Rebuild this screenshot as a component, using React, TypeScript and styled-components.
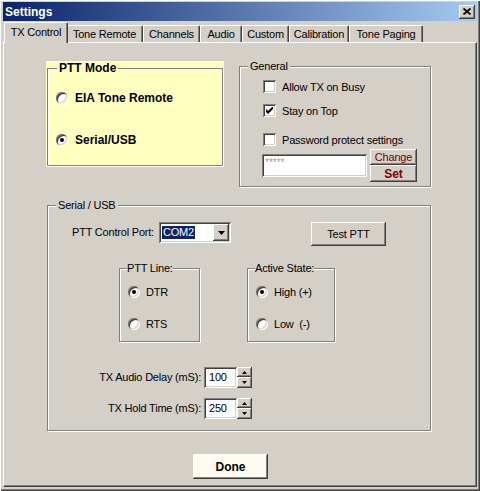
import React from "react";
import styled, { createGlobalStyle } from "styled-components";

const FACE = "#D4D0C8";
const YELLOW = "#FFFFC0";

const GlobalStyle = createGlobalStyle`
  html, body { margin: 0; padding: 0; background: ${FACE}; }
  body {
    font-family: "Liberation Sans", Arial, sans-serif;
    font-size: 11px;
    letter-spacing: -0.2px;
    color: #000;
  }
  * { box-sizing: border-box; }
`;

const Window = styled.div`
  width: 480px;
  height: 491px;
  padding: 2px 3px 3px 3px;
  background: ${FACE};
  box-shadow: inset 1px 1px #fff, inset -1px -1px #404040, inset -2px -2px #808080;
  display: flex;
  flex-direction: column;
`;

const TitleBar = styled.div`
  height: 19px;
  flex: none;
  display: flex;
  align-items: center;
  justify-content: space-between;
  padding: 0 2px;
  background: linear-gradient(to right, #0a246a, #a6caf0);
  color: #fff;
  font-weight: 700;
  font-size: 12px;
  letter-spacing: 0;
`;

const RaisedButton = styled.button<{ $w: number; $h: number; $bg?: string; $color?: string; $bold?: boolean }>`
  width: ${(p) => p.$w}px;
  height: ${(p) => p.$h}px;
  flex: none;
  margin: 0;
  padding: 0;
  border: none;
  background: ${(p) => p.$bg ?? FACE};
  color: ${(p) => p.$color ?? "#000"};
  font-family: inherit;
  font-size: ${(p) => (p.$bold ? 12 : 11)}px;
  font-weight: ${(p) => (p.$bold ? 700 : 400)};
  letter-spacing: ${(p) => (p.$bold ? 0 : -0.2)}px;
  box-shadow: inset -1px -1px #404040, inset 1px 1px #fff, inset -2px -2px #808080;
  display: flex;
  align-items: center;
  justify-content: center;
`;

const CloseGlyph = () => (
  <svg width="8" height="7" viewBox="0 0 8 7">
    <path d="M0.5 0.5 L7.5 6.5 M7.5 0.5 L0.5 6.5" stroke="#000" strokeWidth="1.7" />
  </svg>
);

const TabStrip = styled.div`
  height: 20px;
  flex: none;
  display: flex;
  align-items: flex-end;
  padding-left: 3px;
  margin-top: 1px;
`;

const Tab = styled.div<{ $w: number; $active?: boolean }>`
  width: ${(p) => p.$w + (p.$active ? 4 : 0)}px;
  height: ${(p) => (p.$active ? 21 : 17)}px;
  margin: 0 ${(p) => (p.$active ? -2 : 0)}px ${(p) => (p.$active ? -1 : 0)}px;
  padding-bottom: ${(p) => (p.$active ? 2 : 0)}px;
  position: relative;
  z-index: ${(p) => (p.$active ? 1 : 0)};
  background: ${FACE};
  border-top: 1px solid #fff;
  border-left: 1px solid #fff;
  border-right: 1px solid #404040;
  border-radius: 2px 2px 0 0;
  box-shadow: inset -1px 0 #808080;
  display: flex;
  align-items: center;
  justify-content: center;
  white-space: nowrap;
`;

const Panel = styled.div`
  height: 445px;
  flex: none;
  border-top: 1px solid #fff;
  border-left: 1px solid #fff;
  border-right: 1px solid #404040;
  border-bottom: 1px solid #404040;
  box-shadow: inset -1px -1px #808080;
  display: flex;
  flex-direction: column;
  align-items: flex-start;
`;

const TopRow = styled.div`
  display: flex;
  align-items: flex-start;
  gap: 15px;
  padding: 17px 0 0 42px;
`;

const YellowPanel = styled.div`
  margin-top: 1px;
  padding: 0 1px 1px 1px;
  background: ${YELLOW};
`;

const Group = styled.fieldset<{ $w: number; $h: number; $bg?: string; $ml?: number; $mt?: number }>`
  margin: ${(p) => p.$mt ?? 0}px 0 0 ${(p) => p.$ml ?? 0}px;
  padding: 0;
  min-width: 0;
  width: ${(p) => p.$w}px;
  height: ${(p) => p.$h}px;
  flex: none;
  border: 1px solid #808080;
  box-shadow: inset 1px 1px #fff, 1px 1px #fff;
  background: ${(p) => p.$bg ?? "transparent"};
`;

const Legend = styled.legend<{ $bold?: boolean; $ml: number; $px: number; $bg: string }>`
  margin-left: ${(p) => p.$ml}px;
  padding: 0 ${(p) => p.$px}px;
  font-size: ${(p) => (p.$bold ? 12 : 11)}px;
  font-weight: ${(p) => (p.$bold ? 700 : 400)};
  letter-spacing: ${(p) => (p.$bold ? 0 : -0.2)}px;
  line-height: ${(p) => (p.$bold ? 14 : 13)}px;
  background: ${(p) => p.$bg};
  white-space: nowrap;
`;

const OptionList = styled.div<{ $pt: number; $pl: number; $gap: number }>`
  display: flex;
  flex-direction: column;
  gap: ${(p) => p.$gap}px;
  padding: ${(p) => p.$pt}px 0 0 ${(p) => p.$pl}px;
`;

const Option = styled.label<{ $bold?: boolean; $gap: number; $mt?: number }>`
  display: flex;
  align-items: center;
  gap: ${(p) => p.$gap}px;
  height: 13px;
  margin-top: ${(p) => p.$mt ?? 0}px;
  white-space: nowrap;
  font-size: ${(p) => (p.$bold ? 12 : 11)}px;
  font-weight: ${(p) => (p.$bold ? 700 : 400)};
  letter-spacing: ${(p) => (p.$bold ? 0 : -0.2)}px;
`;

const RadioDot = styled.span<{ $on?: boolean }>`
  width: 12px;
  height: 12px;
  flex: none;
  border-radius: 50%;
  background: #fff;
  position: relative;
  box-shadow: inset 1px 1px #808080, inset -1px -1px #fff, inset 2px 2px #404040,
    inset -2px -2px ${FACE};
  &::after {
    content: "";
    display: ${(p) => (p.$on ? "block" : "none")};
    position: absolute;
    left: 4px;
    top: 4px;
    width: 4px;
    height: 4px;
    border-radius: 50%;
    background: #000;
  }
`;

const CheckBox = styled.span`
  width: 13px;
  height: 13px;
  flex: none;
  background: #fff;
  display: flex;
  align-items: center;
  justify-content: center;
  box-shadow: inset 1px 1px #808080, inset -1px -1px #fff, inset 2px 2px #404040,
    inset -2px -2px ${FACE};
`;

const CheckMark = () => (
  <svg width="7" height="7" viewBox="0 0 7 7">
    <polygon points="0,2 2,4 7,-1 7,2 2,7 0,5" fill="#000" />
  </svg>
);

const GeneralBody = styled.div`
  display: flex;
  flex-direction: column;
  padding: 7px 0 0 23px;
`;

const PasswordRow = styled.div`
  display: flex;
  align-items: center;
  gap: 3px;
  margin: 3px 0 0 -1px;
`;

const Sunken = styled.div<{ $w: number; $h: number }>`
  width: ${(p) => p.$w}px;
  height: ${(p) => p.$h}px;
  flex: none;
  background: #fff;
  box-shadow: inset 1px 1px #808080, inset -1px -1px #fff, inset 2px 2px #404040,
    inset -2px -2px ${FACE};
`;

const PasswordEdit = styled(Sunken)`
  padding: 4px 0 0 3px;
  color: #a0a0a0;
  font-size: 10px;
  letter-spacing: 0;
  line-height: 10px;
`;

const ButtonStack = styled.div`
  display: flex;
  flex-direction: column;
`;

const SerialBody = styled.div`
  display: flex;
  flex-direction: column;
  align-items: flex-start;
`;

const PortRow = styled.div`
  display: flex;
  align-items: flex-start;
  margin: 10px 0 0 24px;
`;

const FieldLabel = styled.span<{ $w: number }>`
  width: ${(p) => p.$w}px;
  height: 21px;
  line-height: 21px;
  flex: none;
  white-space: nowrap;
`;

const Combo = styled(Sunken)`
  display: flex;
  align-items: center;
  justify-content: space-between;
  padding: 2px;
  margin-right: 80px;
`;

const Selection = styled.span`
  margin-left: 1px;
  height: 13px;
  line-height: 13px;
  padding: 0 1px;
  background: #0a246a;
  color: #fff;
`;

const Arrow = ({ up, w, h }: { up?: boolean; w: number; h: number }) => (
  <svg width={w} height={h} viewBox={`0 0 ${w} ${h}`}>
    <polygon points={up ? `0,${h} ${w},${h} ${w / 2},0` : `0,0 ${w},0 ${w / 2},${h}`} fill="#000" />
  </svg>
);

const LineRow = styled.div`
  display: flex;
  align-items: flex-start;
  gap: 47px;
  margin: 16px 0 0 71px;
`;

const SpinGrid = styled.div`
  display: grid;
  grid-template-columns: 156px 33px 15px;
  grid-auto-rows: 21px;
  column-gap: 0;
  row-gap: 10px;
  margin-top: 25px;
`;

const SpinLabel = styled.span`
  text-align: right;
  line-height: 21px;
  padding-right: 3px;
  white-space: nowrap;
`;

const SpinEdit = styled(Sunken)`
  padding-left: 5px;
  line-height: 21px;
`;

const Spinner = styled.div`
  display: grid;
  grid-template-rows: 10px 11px;
`;

const SpinButton = styled.div`
  background: ${FACE};
  display: flex;
  align-items: center;
  justify-content: center;
  box-shadow: inset -1px -1px #404040, inset 1px 1px #fff, inset -2px -2px #808080;
`;

const DoneWrap = styled.div`
  margin: 23px 0 0 189px;
`;

const tabs: { label: string; w: number }[] = [
  { label: "TX Control", w: 60 },
  { label: "Tone Remote", w: 77 },
  { label: "Channels", w: 57 },
  { label: "Audio", w: 42 },
  { label: "Custom", w: 47 },
  { label: "Calibration", w: 60 },
  { label: "Tone Paging", w: 74 },
];

const spins = [
  { label: "TX Audio Delay (mS):", value: "100" },
  { label: "TX Hold Time (mS):", value: "250" },
];

export default function App() {
  return (
    <>
      <GlobalStyle />
      <Window>
        <TitleBar>
          <span>Settings</span>
          <RaisedButton $w={16} $h={14}>
            <CloseGlyph />
          </RaisedButton>
        </TitleBar>

        <TabStrip>
          {tabs.map((t, i) => (
            <Tab key={t.label} $w={t.w} $active={i === 0}>
              {t.label}
            </Tab>
          ))}
        </TabStrip>

        <Panel>
          <TopRow>
            <YellowPanel>
              <Group $w={176} $h={105} $bg={YELLOW}>
                <Legend $bold $ml={9} $px={2} $bg={YELLOW}>
                  PTT Mode
                </Legend>
                <OptionList $pt={16} $pl={8} $gap={29}>
                  <Option $bold $gap={7}>
                    <RadioDot />
                    EIA Tone Remote
                  </Option>
                  <Option $bold $gap={7}>
                    <RadioDot $on />
                    Serial/USB
                  </Option>
                </OptionList>
              </Group>
            </YellowPanel>

            <Group $w={192} $h={127}>
              <Legend $ml={8} $px={2} $bg={FACE}>
                General
              </Legend>
              <GeneralBody>
                <Option $gap={6}>
                  <CheckBox />
                  Allow TX on Busy
                </Option>
                <Option $gap={6} $mt={11}>
                  <CheckBox>
                    <CheckMark />
                  </CheckBox>
                  Stay on Top
                </Option>
                <Option $gap={6} $mt={16}>
                  <CheckBox />
                  Password protect settings
                </Option>
                <PasswordRow>
                  <PasswordEdit $w={105} $h={23}>*****</PasswordEdit>
                  <ButtonStack>
                    <RaisedButton $w={47} $h={16} $color="#800000">
                      Change
                    </RaisedButton>
                    <RaisedButton $w={47} $h={17} $color="#800000" $bold>
                      Set
                    </RaisedButton>
                  </ButtonStack>
                </PasswordRow>
              </GeneralBody>
            </Group>
          </TopRow>

          <Group $w={384} $h={232} $ml={43} $mt={12}>
            <Legend $ml={8} $px={2} $bg={FACE}>
              Serial / USB
            </Legend>
            <SerialBody>
              <PortRow>
                <FieldLabel $w={87}>PTT Control Port:</FieldLabel>
                <Combo $w={72} $h={21}>
                  <Selection>COM2</Selection>
                  <RaisedButton $w={16} $h={17}>
                    <Arrow w={7} h={4} />
                  </RaisedButton>
                </Combo>
                <RaisedButton $w={75} $h={24}>
                  Test PTT
                </RaisedButton>
              </PortRow>

              <LineRow>
                <Group $w={81} $h={80}>
                  <Legend $ml={7} $px={0} $bg={FACE}>
                    PTT Line:
                  </Legend>
                  <OptionList $pt={10} $pl={8} $gap={19}>
                    <Option $gap={6}>
                      <RadioDot $on />
                      DTR
                    </Option>
                    <Option $gap={6}>
                      <RadioDot />
                      RTS
                    </Option>
                  </OptionList>
                </Group>
                <Group $w={88} $h={80}>
                  <Legend $ml={7} $px={0} $bg={FACE}>
                    Active State:
                  </Legend>
                  <OptionList $pt={10} $pl={8} $gap={19}>
                    <Option $gap={6}>
                      <RadioDot $on />
                      High (+)
                    </Option>
                    <Option $gap={6}>
                      <RadioDot />
                      Low&nbsp; (-)
                    </Option>
                  </OptionList>
                </Group>
              </LineRow>

              <SpinGrid>
                {spins.map((s) => (
                  <React.Fragment key={s.label}>
                    <SpinLabel>{s.label}</SpinLabel>
                    <SpinEdit $w={33} $h={21}>
                      {s.value}
                    </SpinEdit>
                    <Spinner>
                      <SpinButton>
                        <Arrow up w={5} h={3} />
                      </SpinButton>
                      <SpinButton>
                        <Arrow w={5} h={3} />
                      </SpinButton>
                    </Spinner>
                  </React.Fragment>
                ))}
              </SpinGrid>
            </SerialBody>
          </Group>

          <DoneWrap>
            <RaisedButton $w={75} $h={25} $bg="#FFFBF0" $bold>
              Done
            </RaisedButton>
          </DoneWrap>
        </Panel>
      </Window>
    </>
  );
}
